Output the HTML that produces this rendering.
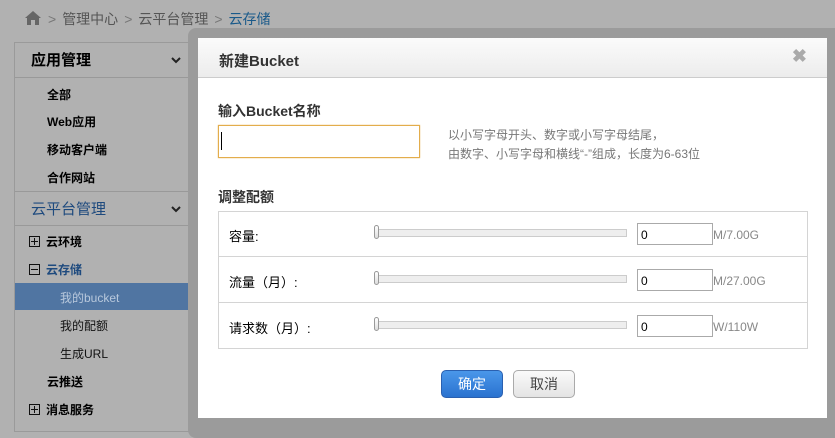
<!DOCTYPE html>
<html><head><meta charset="utf-8"><style>
*{margin:0;padding:0;box-sizing:border-box}
body{width:835px;height:426px;overflow:hidden;background:#b1b1b1;font-family:"Liberation Sans","Noto Sans CJK SC",sans-serif;position:relative;color:#000}
.a{position:absolute}
.bc{top:9px;left:24px;font-size:14px;color:#555;white-space:nowrap}
.bc .sep{color:#777;margin:0 6px}
.side{left:14px;top:42px;width:190px;height:390px;border:1px solid #9a9a9a;border-right:none}
.hd{position:absolute;left:0;width:190px;height:35px;font-size:15px;font-weight:bold;padding-left:16px;line-height:35px;border-bottom:1px solid #999}
.hd svg{position:absolute;left:156px;top:14px}
.it{position:absolute;font-size:12px;font-weight:bold;left:32px}
.it2{position:absolute;font-size:12px;left:45px;color:#111}
.box{display:inline-block;width:11px;height:11px;border:1px solid #111;position:relative;vertical-align:-1px;margin-right:6px}
.box:before{content:"";position:absolute;left:1px;top:4px;width:7px;height:1px;background:#111}
.box.p:after{content:"";position:absolute;left:4px;top:1px;width:1px;height:7px;background:#111}
.frame{left:188px;top:28px;width:660px;height:410px;background:#9b9b9b;border-radius:8px}
.dlg{left:198px;top:38px;width:629px;height:380px;background:#fff}
.dh{height:40px;background:linear-gradient(#fbfbfb,#ececec);border-bottom:1px solid #ccc;font-size:15px;font-weight:bold;color:#333;padding:12px 0 0 21px}
.lab{font-size:14px;font-weight:bold;color:#333}
.row{position:absolute;left:20px;width:590px;height:46px;border:1px solid #d4d4d4;border-top:none;font-size:13px}
.row .l{position:absolute;left:10px;top:15px}
.trk{position:absolute;left:157px;top:18px;width:251px;height:8px;background:#eee;border:1px solid #ccc}
.th{position:absolute;left:155px;top:14px;width:5px;height:14px;border:1px solid #999;border-radius:3px;background:linear-gradient(#fff,#ddd)}
.inp{position:absolute;left:418px;top:12px;width:76px;height:22px;border:1px solid #aaa;font-size:12px;padding:4px 0 0 3px}
.u{position:absolute;left:494px;top:17px;color:#888;font-size:12px}
.btn{position:absolute;top:332px;width:62px;height:28px;border-radius:5px;font-size:14px;text-align:center;line-height:26px}
</style></head><body>
<div class="a bc"><svg width="18" height="16" viewBox="0 0 18 16" style="vertical-align:-2px"><path d="M9 1L1 8h2v7h4v-5h4v5h4V8h2z" fill="#666"/></svg><span class="sep">&gt;</span>管理中心<span class="sep">&gt;</span>云平台管理<span class="sep">&gt;</span><span style="color:#1a5a8a">云存储</span></div>
<div class="a side">
<div class="hd" style="top:0">应用管理<svg width="10" height="7" viewBox="0 0 10 7"><path d="M1 1l4 4 4-4" stroke="#222" stroke-width="2" fill="none"/></svg></div>
<div class="it" style="top:43px">全部</div>
<div class="it" style="top:70px">Web应用</div>
<div class="it" style="top:98px">移动客户端</div>
<div class="it" style="top:126px">合作网站</div>
<div class="hd" style="top:148px;border-top:1px solid #999;color:#1e4a7e;font-weight:normal">云平台管理<svg width="10" height="7" viewBox="0 0 10 7"><path d="M1 1l4 4 4-4" stroke="#222" stroke-width="2" fill="none"/></svg></div>
<div class="it" style="top:190px;left:14px"><span class="box p"></span>云环境</div>
<div class="it" style="top:218px;left:14px;color:#1e4a7e"><span class="box"></span>云存储</div>
<div class="a" style="left:0;top:240px;width:190px;height:27px;background:#5075a2"></div>
<div class="it2" style="top:246px;color:#b8c8dc">我的bucket</div>
<div class="it2" style="top:274px">我的配额</div>
<div class="it2" style="top:302px">生成URL</div>
<div class="it" style="top:330px">云推送</div>
<div class="it" style="top:358px;left:14px"><span class="box p"></span>消息服务</div>
</div>
<div class="a" style="left:826px;top:118px;width:9px;height:24px;background:#4a6f95"></div>
<div class="a frame"></div>
<div class="a dlg">
<div class="dh">新建Bucket<span style="position:absolute;right:20px;top:8px;font-size:18px;color:#aaa">&#10006;</span></div>
<div class="a lab" style="left:20px;top:63px">输入Bucket名称</div>
<div class="a" style="left:20px;top:87px;width:202px;height:33px;border:1px solid #e3ad4c;box-shadow:0 0 1px #e3ad4c"><div style="position:absolute;left:2px;top:6px;width:1px;height:18px;background:#000"></div></div>
<div class="a" style="left:250px;top:88px;font-size:12px;color:#777;line-height:19px">以小写字母开头、数字或小写字母结尾，<br>由数字、小写字母和横线“-”组成，长度为6-63位</div>
<div class="a lab" style="left:20px;top:149px">调整配额</div>
<div class="a" style="left:20px;top:173px;width:590px;border-top:1px solid #d4d4d4"></div>
<div class="row" style="top:173px"><span class="l">容量:</span><div class="trk"></div><div class="th"></div><div class="inp">0</div><span class="u">M/7.00G</span></div>
<div class="row" style="top:219px"><span class="l">流量（月）:</span><div class="trk"></div><div class="th"></div><div class="inp">0</div><span class="u">M/27.00G</span></div>
<div class="row" style="top:265px"><span class="l">请求数（月）:</span><div class="trk"></div><div class="th"></div><div class="inp">0</div><span class="u">W/110W</span></div>
<div class="btn" style="left:243px;background:linear-gradient(#4a97ea,#2a72cf);border:1px solid #2a60b0;color:#fff">确定</div>
<div class="btn" style="left:315px;background:linear-gradient(#fafafa,#e4e4e4);border:1px solid #aaa;color:#444">取消</div>
</div>
</body></html>
